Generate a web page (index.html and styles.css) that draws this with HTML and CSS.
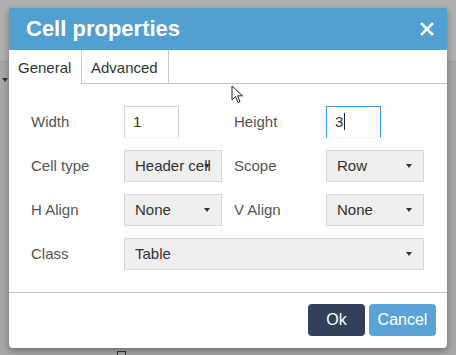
FILE: index.html
```html
<!DOCTYPE html>
<html lang="en">
<head>
    <meta charset="UTF-8">
    <title>Cell properties</title>
    <link rel="stylesheet" href="styles.css">
</head>
<body>
    <div class="backdrop">
        <div class="toolbar">
            <span class="tool-caret"></span>
        </div>
        <div class="editor-area">
            <span class="cell-marker"></span>
        </div>
    </div>

    <div class="dialog">
        <div class="dialog-header">
            <h1>Cell properties</h1>
            <button class="close-btn" aria-label="Close">
                <svg width="14" height="14" viewBox="0 0 14 14">
                    <path d="M2 2 L12 12 M12 2 L2 12" stroke="#fff" stroke-width="2.6" stroke-linecap="square"/>
                </svg>
            </button>
        </div>

        <div class="tabs">
            <div class="tab active">General</div>
            <div class="tab">Advanced</div>
        </div>

        <div class="form">
            <label>Width</label>
            <div class="field"><div class="text-input">1</div></div>
            <label>Height</label>
            <div class="field"><div class="text-input focused">3<span class="text-caret"></span></div></div>

            <label>Cell type</label>
            <div class="select"><span>Header cell</span><i class="caret"></i></div>
            <label>Scope</label>
            <div class="select"><span>Row</span><i class="caret"></i></div>

            <label>H Align</label>
            <div class="select"><span>None</span><i class="caret"></i></div>
            <label>V Align</label>
            <div class="select"><span>None</span><i class="caret"></i></div>

            <label>Class</label>
            <div class="select wide"><span>Table</span><i class="caret"></i></div>
        </div>

        <div class="dialog-footer">
            <button class="btn btn-ok">Ok</button>
            <button class="btn btn-cancel">Cancel</button>
        </div>

        <svg class="pointer" width="14" height="20" viewBox="0 0 14 20">
            <path d="M1 1 L1 15 L4.5 11.5 L7 17.5 L9 16.6 L6.6 10.8 L11.5 10.8 Z" fill="#fff" stroke="#222" stroke-width="1"/>
        </svg>
    </div>
</body>
</html>
```

FILE: styles.css
```css
* {
    box-sizing: border-box;
    margin: 0;
    padding: 0;
}

body {
    width: 456px;
    height: 355px;
    overflow: hidden;
    font-family: "Liberation Sans", Arial, sans-serif;
    background-color: #a8a8a8;
    color: #333;
    position: relative;
}

.backdrop {
    display: flex;
    flex-direction: column;
    height: 100%;
}

.toolbar {
    height: 62px;
    background-color: #afafaf;
    border-bottom: 1px solid #9a9a9a;
    position: relative;
}

.tool-caret {
    position: absolute;
    left: 2px;
    top: 78px;
    border-left: 3px solid transparent;
    border-right: 3px solid transparent;
    border-top: 4px solid #333;
}

.editor-area {
    flex-grow: 1;
    position: relative;
}

.cell-marker {
    position: absolute;
    left: 117px;
    top: 289px;
    width: 9px;
    height: 9px;
    border: 1px solid #333;
}

/* modal */
.dialog {
    position: absolute;
    left: 9px;
    top: 8px;
    width: 438px;
    height: 340px;
    background: white;
    border-radius: 0 0 4px 4px;
    box-shadow: 0 3px 7px rgba(0,0,0,0.35);
    display: flex;
    flex-direction: column;
}

.dialog-header {
    height: 42px;
    background-color: #529fd2;
    display: flex;
    align-items: center;
    justify-content: space-between;
    padding: 0 13px 0 17px;
}

.dialog-header h1 {
    color: white;
    font-size: 22px;
    font-weight: bold;
}

.close-btn {
    background: none;
    border: none;
    width: 14px;
    height: 14px;
    display: flex;
}

.tabs {
    display: flex;
    height: 34px;
    border-bottom: 1px solid #c8c8c8;
}

.tab {
    font-size: 15px;
    color: #333;
    padding: 9px 0 0 9px;
    border-right: 1px solid #c8c8c8;
}

.tab.active {
    width: 73px;
    height: 34px;
    background: white;
}

.tab:not(.active) {
    width: 87px;
}

.form {
    display: grid;
    grid-template-columns: 81px 98px 80px 98px;
    column-gap: 12px;
    row-gap: 12px;
    grid-auto-rows: 32px;
    padding: 22px 23px 0 22px;
    flex-grow: 1;
    align-items: center;
}

.form label {
    font-size: 15px;
    color: #555;
    margin-top: -1px;
}

.field {
    height: 32px;
}

.text-input {
    width: 55px;
    height: 32px;
    border: 1px solid #d0d0d0;
    border-bottom-color: #f4f4f4;
    font-size: 15px;
    color: #333;
    padding: 6px 0 0 8px;
    display: flex;
    align-items: flex-start;
}

.text-input.focused {
    border-color: #3b9ae1;
    border-bottom-color: #eef6fc;
}

.text-caret {
    display: inline-block;
    width: 1px;
    height: 17px;
    background: #222;
    margin-left: 1px;
}

.select {
    position: relative;
    height: 32px;
    background-color: #efefef;
    border: 1px solid #d6d6d6;
    font-size: 15px;
    color: #333;
    padding: 6px 0 0 10px;
    white-space: nowrap;
    overflow: hidden;
}

.select.wide {
    grid-column: 2 / 5;
}

.caret {
    position: absolute;
    right: 11px;
    top: 13px;
    border-left: 3.5px solid transparent;
    border-right: 3.5px solid transparent;
    border-top: 4px solid #333;
}

.dialog-footer {
    border-top: 1px solid #c8c8c8;
    height: 56px;
    display: flex;
    justify-content: flex-end;
    align-items: flex-start;
    gap: 4px;
    padding: 11px 11px 0 0;
}

.btn {
    height: 32px;
    border: none;
    border-radius: 4px;
    color: white;
    font-family: inherit;
    font-size: 16px;
}

.btn-ok {
    width: 57px;
    background-color: #34405a;
}

.btn-cancel {
    width: 67px;
    background-color: #5aa3d6;
}

.pointer {
    position: absolute;
    left: 222px;
    top: 77px;
}
```
